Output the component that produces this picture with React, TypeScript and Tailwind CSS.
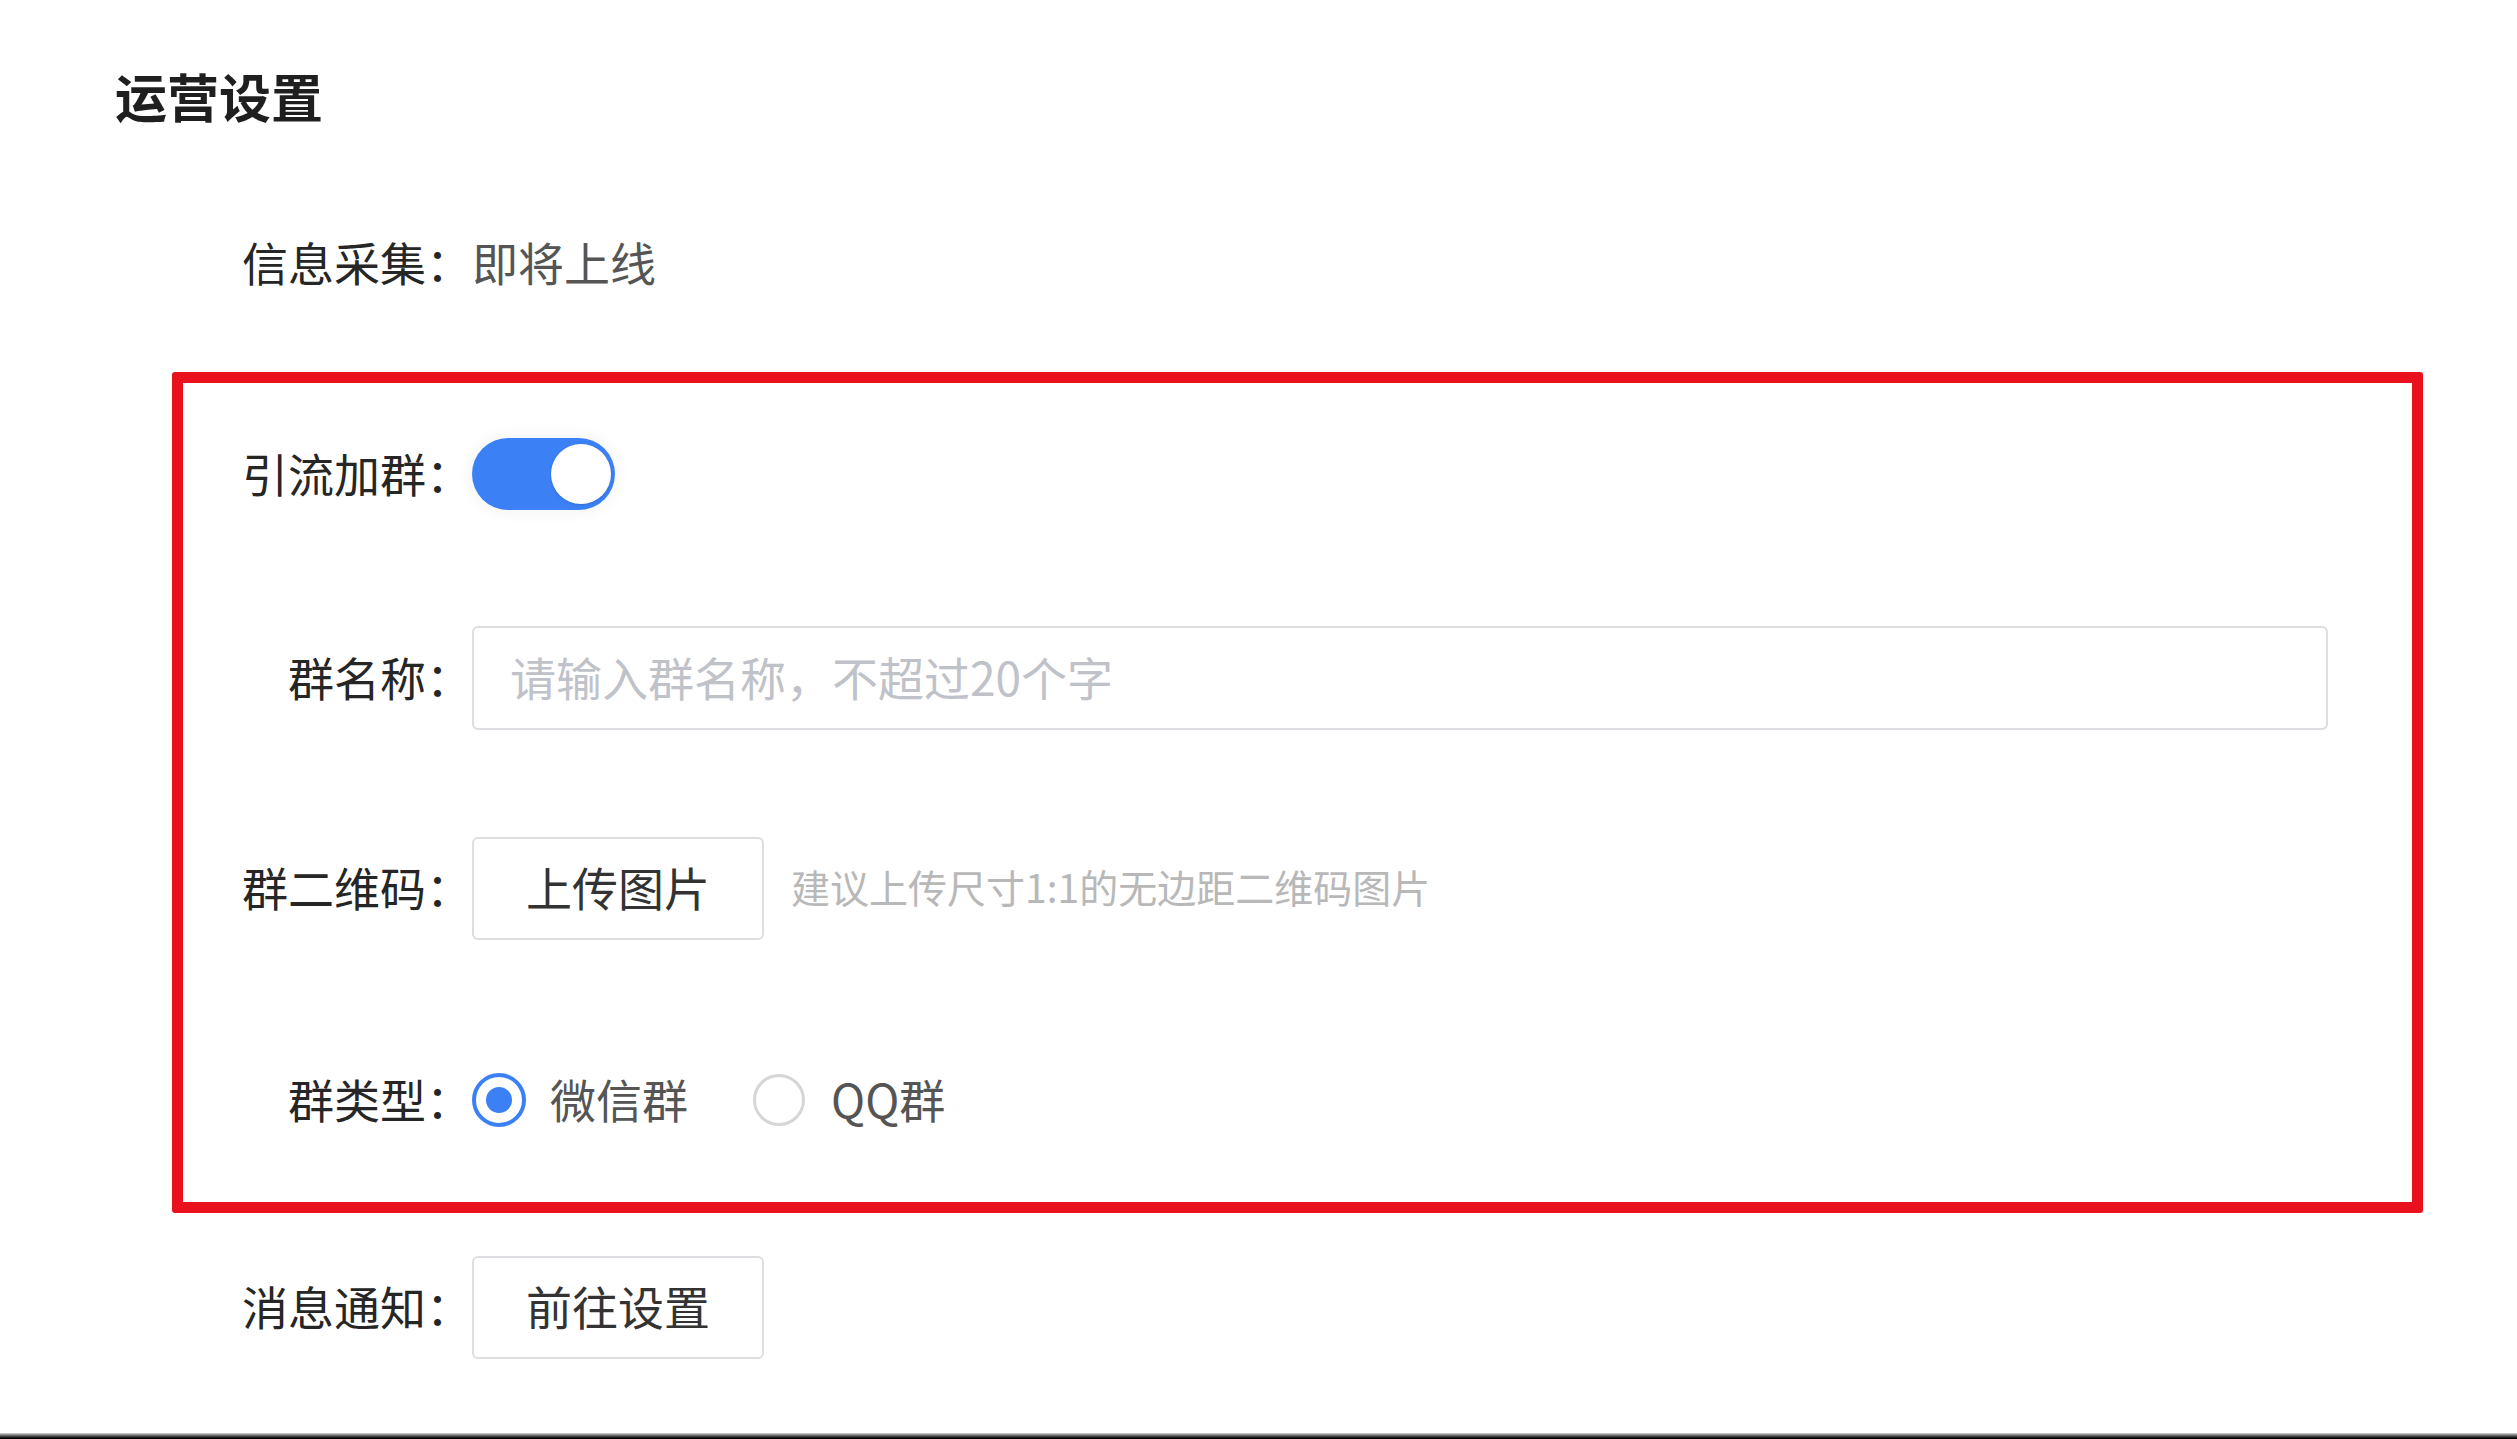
import React from "react";

const FONT = { fontFamily: '"Noto Sans CJK SC", "Noto Sans", sans-serif' };

function Label({ text, w }: { text: string; w: string }) {
  return (
    <div className={`${w} shrink-0 text-right text-[46px] leading-none text-[#262626] pb-[5px]`}>{text}</div>
  );
}

export default function App() {
  return (
    <div className="w-[2517px] h-[1439px] bg-white flex flex-col overflow-hidden" style={FONT}>
      <div className="flex-1 flex flex-col pt-[47px]">
        {/* Title */}
        <div className="h-[104px] flex items-center pl-[115px]">
          <h1 className="text-[52px] leading-none font-bold text-[#1f1f1f] pb-[6px]">运营设置</h1>
        </div>

        {/* 信息采集 */}
        <div className="mt-[60px] h-[104px] flex items-center">
          <Label text="信息采集：" w="w-[472px]" />
          <div className="text-[46px] leading-none text-[#555555] pb-[5px]">即将上线</div>
        </div>

        {/* Highlighted group */}
        <div className="mt-[57px] ml-[172px] w-[2251px] border-[11px] border-[#e8111d] rounded-[3px] pt-[39px] pb-[50px] flex flex-col">
          {/* 引流加群 */}
          <div className="h-[104px] flex items-center">
            <Label text="引流加群：" w="w-[289px]" />
            <div className="relative w-[143px] h-[72px] rounded-full bg-[#3b80f5] shadow-[0_0_14px_4px_rgba(0,0,0,0.04)]">
              <div className="absolute right-[4px] top-[6px] w-[60px] h-[60px] rounded-full bg-white shadow-[0_1px_3px_rgba(0,0,0,0.15)]" />
            </div>
          </div>

          {/* 群名称 */}
          <div className="mt-[100px] h-[104px] flex items-center">
            <Label text="群名称：" w="w-[289px]" />
            <div className="w-[1856px] h-[104px] border-2 border-[#dcdee2] rounded-[6px] flex items-center pl-[36px]">
              <span className="text-[46px] leading-none text-[#bfc2c8] pb-[5px]">请输入群名称，不超过20个字</span>
            </div>
          </div>

          {/* 群二维码 */}
          <div className="mt-[106px] h-[104px] flex items-center">
            <Label text="群二维码：" w="w-[289px]" />
            <div className="w-[292px] h-[103px] border-2 border-[#dcdee2] rounded-[6px] flex items-center justify-center">
              <span className="text-[46px] leading-none text-[#333333] pb-[5px]">上传图片</span>
            </div>
            <span className="ml-[27px] text-[39px] leading-none text-[#b8b8b8] pb-[4px]">建议上传尺寸1:1的无边距二维码图片</span>
          </div>

          {/* 群类型 */}
          <div className="mt-[108px] h-[104px] flex items-center">
            <Label text="群类型：" w="w-[289px]" />
            <div className="flex items-center gap-[24px]">
              <div className="w-[54px] h-[54px] rounded-full border-[4px] border-[#3b80f5] flex items-center justify-center">
                <div className="w-[26px] h-[26px] rounded-full bg-[#3b80f5]" />
              </div>
              <span className="text-[46px] leading-none text-[#555555] pb-[5px]">微信群</span>
            </div>
            <div className="ml-[65px] flex items-center gap-[26px]">
              <div className="w-[52px] h-[52px] rounded-full border-[3px] border-[#d6d6d6]" />
              <span className="text-[46px] leading-none text-[#555555] pb-[5px]">QQ群</span>
            </div>
          </div>
        </div>

        {/* 消息通知 */}
        <div className="mt-[42px] h-[104px] flex items-center">
          <Label text="消息通知：" w="w-[472px]" />
          <div className="w-[292px] h-[103px] border-2 border-[#dcdee2] rounded-[6px] flex items-center justify-center">
            <span className="text-[46px] leading-none text-[#333333] pb-[5px]">前往设置</span>
          </div>
        </div>
      </div>
      <div className="h-[6px] bg-linear-to-b from-[#d8d8d8] via-[#555555] to-black" />
    </div>
  );
}
